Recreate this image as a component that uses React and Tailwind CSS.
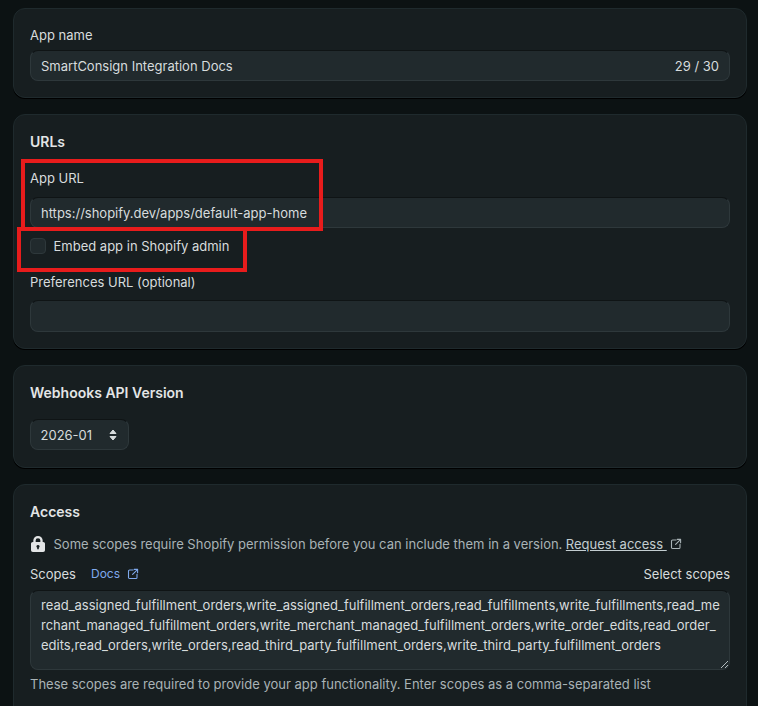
import React from 'react';

const inputClass = 'flex items-center px-[10px] rounded-lg bg-[#212a2d] border border-[#2e383b] border-t-[#0f1415] text-[13px] text-[#d7dcdd]';

const Card = ({ className, children }) => (
  <section className={`rounded-xl bg-[#171e20] border border-[#1f2a2d] shadow-[0_1px_0_#000] px-4 ${className}`}>
    {children}
  </section>
);

const Heading = ({ children }) => (
  <h2 className="text-[14px] leading-[20px] font-semibold text-[#e3e5e6]">{children}</h2>
);

const ExternalIcon = ({ className }) => (
  <svg className={className} viewBox="0 0 12 12" fill="none" stroke="currentColor" strokeWidth="1.1" strokeLinecap="round" strokeLinejoin="round">
    <path d="M6 2H2.6A1.1 1.1 0 0 0 1.5 3.1v6.3a1.1 1.1 0 0 0 1.1 1.1h6.3a1.1 1.1 0 0 0 1.1-1.1V6.2" />
    <path d="M7.2 1.4h3.4v3.4" />
    <path d="M10.4 1.6 5.6 6.4" />
  </svg>
);

const App = () => {
  return (
    <div className="h-[706px] overflow-hidden bg-[#0c1213] pl-[13px] pr-[11px] pt-2 flex flex-col gap-4 font-['Inter',sans-serif] text-[13px] leading-[20px] text-[#d7dcdd]">
      <Card className="h-[90px] shrink-0 pt-4">
        <label className="block">App name</label>
        <div className={`${inputClass} h-[31px] mt-[5px] justify-between`}>
          <span>SmartConsign Integration Docs</span>
          <span>29 / 30</span>
        </div>
      </Card>

      <Card className="relative h-[235px] shrink-0 pt-[17px]">
        <Heading>URLs</Heading>
        <label className="block mt-[16px]">App URL</label>
        <div className={`${inputClass} h-[31px] mt-[9px]`}>https://shopify.dev/apps/default-app-home</div>
        <div className="flex items-center gap-[7.5px] mt-[8px]">
          <span className="w-4 h-4 rounded-[4px] bg-[#212a2d] border border-[#2e383b]" />
          <span>Embed app in Shopify admin</span>
        </div>
        <label className="block mt-[16px]">Preferences URL (optional)</label>
        <div className={`${inputClass} h-[32px] mt-2`} />

        {/* red annotation boxes */}
        <div className="absolute left-[7px] top-[44px] w-[302px] h-[72px] border-[4px] border-[#e81c1c]" />
        <div className="absolute left-[3px] top-[112px] w-[230px] h-[45px] border-[4px] border-[#e81c1c]" />
      </Card>

      <Card className="h-[103px] shrink-0 pt-[17px]">
        <Heading>Webhooks API Version</Heading>
        <div className={`${inputClass} w-[99px] h-[31px] mt-[16px] justify-between pl-[9.5px] pr-[11px]`}>
          <span>2026-01</span>
          <svg className="w-2 h-3 text-[#d7dcdd]" viewBox="0 0 8 12" fill="currentColor" stroke="currentColor" strokeWidth="1" strokeLinejoin="round">
            <path d="M4 1 7 4.500H1Z" />
            <path d="M4 11 1 7.500H7Z" />
          </svg>
        </div>
      </Card>

      <Card className="h-[260px] shrink-0 pt-[17px]">
        <Heading>Access</Heading>
        <div className="flex items-center gap-[8.5px] mt-[12px] text-[#a9b3b6]">
          <svg className="ml-px w-[14px] h-4 text-[#e3e5e6]" viewBox="2 0.6 12 14.7" preserveAspectRatio="none" fill="currentColor">
            <path fillRule="evenodd" d="M4 6V4.600a4 4 0 0 1 8 0V6h.4A1.600 1.600 0 0 1 14 7.600v6.100a1.600 1.600 0 0 1-1.600 1.600H3.600A1.600 1.600 0 0 1 2 13.700V7.600A1.600 1.600 0 0 1 3.600 6H4Zm2-1.400a2 2 0 1 1 4 0V6H6V4.600ZM8 8.800a1.400 1.400 0 0 0-.7 2.600v1.400h1.400v-1.400A1.400 1.400 0 0 0 8 8.800Z" clipRule="evenodd" />
          </svg>
          <span className="flex items-center">
            Some scopes require Shopify permission before you can include them in a version.
            <a className="ml-[3.5px] text-[#c3cdd0] underline whitespace-pre">Request access </a>
            <ExternalIcon className="ml-[3px] w-3 h-3" />
          </span>
        </div>
        <div className="flex items-center justify-between mt-[10px]">
          <div className="flex items-center">
            <span>Scopes</span>
            <a className="ml-[15px] text-[12px] text-[#7fa9ec]">Docs</a>
            <ExternalIcon className="ml-[7px] w-3 h-3 text-[#7fa9ec]" />
          </div>
          <span>Select scopes</span>
        </div>
        <div className="relative mt-[6px] h-[80px] rounded-lg bg-[#212a2d] border border-[#2e383b] border-t-[#0f1415] pl-[10px] pr-[8px] py-[4px] break-all">
          read_assigned_fulfillment_orders,write_assigned_fulfillment_orders,read_fulfillments,write_fulfillments,read_merchant_managed_fulfillment_orders,write_merchant_managed_fulfillment_orders,write_order_edits,read_order_edits,read_orders,write_orders,read_third_party_fulfillment_orders,write_third_party_fulfillment_orders
          <svg className="absolute right-[1px] bottom-[1px] w-2 h-2 text-[#c3cdd0]" viewBox="0 0 8 8" stroke="currentColor" strokeWidth="0.9">
            <path d="M1 8 8 1M5 8l3-3" />
          </svg>
        </div>
        <p className="mt-[4px] text-[#a9b3b6]">These scopes are required to provide your app functionality. Enter scopes as a comma-separated list</p>
      </Card>
    </div>
  );
};

export default App;
